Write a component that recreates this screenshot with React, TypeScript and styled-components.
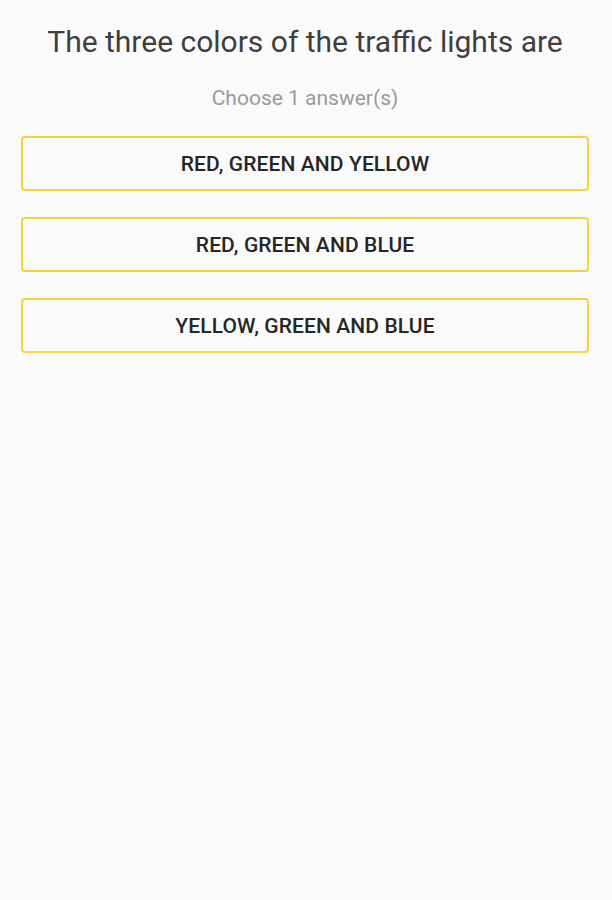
import React from "react";
import styled, { createGlobalStyle } from "styled-components";

const Global = createGlobalStyle`
  html, body { margin: 0; padding: 0; background: #fafafa; }
  body { font-family: Roboto, "Noto Sans", sans-serif; }
`;

const Page = styled.div`
  min-height: 900px;
  background: #fafafa;
  display: flex;
  flex-direction: column;
  align-items: stretch;
  padding: 0 23px 0 21px;
  box-sizing: border-box;
`;

const Title = styled.h1`
  margin: 24px 0 0;
  font-size: 30px;
  font-weight: 400;
  line-height: 36px;
  color: #3f3f3f;
  text-align: center;
`;

const Hint = styled.p`
  margin: 25px 0 0;
  font-size: 21px;
  line-height: 26px;
  color: #9a9a9a;
  text-align: center;
`;

const Options = styled.div`
  display: flex;
  flex-direction: column;
  gap: 26px;
  margin-top: 25px;
`;

const Option = styled.button`
  height: 55px;
  border: 2px solid #f7d43e;
  border-radius: 4px;
  background: transparent;
  font-family: Roboto, "Noto Sans", sans-serif;
  font-size: 21px;
  font-weight: 500;
  letter-spacing: 0.1px;
  color: #262626;
  text-align: center;
  padding: 0;
`;

const answers = ["RED, GREEN AND YELLOW", "RED, GREEN AND BLUE", "YELLOW, GREEN AND BLUE"];

export default function App() {
  return (
    <>
      <Global />
      <Page>
        <Title>The three colors of the traffic lights are</Title>
        <Hint>Choose 1 answer(s)</Hint>
        <Options>
          {answers.map((a) => (
            <Option key={a}>{a}</Option>
          ))}
        </Options>
      </Page>
    </>
  );
}
